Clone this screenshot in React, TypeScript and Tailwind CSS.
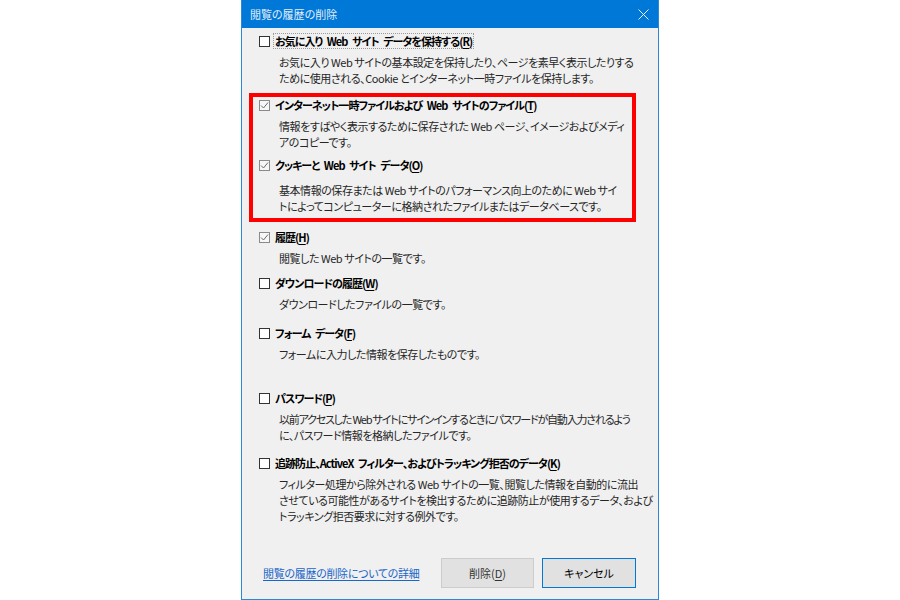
import { PropsWithChildren, ReactNode } from "react";

type OptionProps = {
  label: string;
  accel: string;
  lines: ReactNode[];
  checked?: boolean;
  focused?: boolean;
  className?: string;
  descClassName?: string;
};

const font = "font-['Noto_Sans_CJK_JP','Noto_Sans',sans-serif] [font-feature-settings:'palt']";

const CheckBox = ({ checked }: { checked?: boolean }) => {
  if (checked) {
    return (
      <span className="flex h-[11px] w-[11px] shrink-0 items-center justify-center border border-[#8a8a8a] bg-[#f7f7f7]">
        <svg width="9" height="9" viewBox="0 0 9 9" fill="none">
          <path d="M1 4.5 L3.5 7 L8 1.5" stroke="#6b6b6b" strokeWidth="1" />
        </svg>
      </span>
    );
  }
  return (
    <span className="block h-[11px] w-[11px] shrink-0 border border-[#333333] bg-white" />
  );
};

const Accel = ({ children }: PropsWithChildren) => (
  <span>
    (<span className="underline underline-offset-2">{children}</span>)
  </span>
);

const Option = ({
  label,
  accel,
  lines,
  checked,
  focused,
  className,
  descClassName = "mt-[5px]",
}: OptionProps) => {
  return (
    <div className={className}>
      <div className="flex h-[16px] items-center gap-[3px]">
        <CheckBox checked={checked} />
        <span
          className={
            focused
              ? "border border-dotted border-[#9a9a9a] px-[1px] text-[11px] leading-[14px] font-bold tracking-[-0.95px] [word-spacing:3px] whitespace-nowrap text-black"
              : "px-[2px] text-[11px] leading-[16px] font-bold tracking-[-0.95px] [word-spacing:3px] whitespace-nowrap text-black"
          }
        >
          {label}
          <Accel>{accel}</Accel>
        </span>
      </div>
      <div
        className={`${descClassName} pl-[20px] text-[11px] leading-[16px] tracking-[-0.45px] whitespace-nowrap text-[#262626]`}
      >
        {lines.map((line, i) => (
          <div key={i}>{line}</div>
        ))}
      </div>
    </div>
  );
};

export default function App() {
  return (
    <div className={`flex min-h-screen justify-center bg-white ${font}`}>
      <div className="flex h-[600px] w-[418px] flex-col overflow-hidden border border-t-0 border-[#2b88d9] bg-[#f0f0f0]">
        <div className="-mx-px flex h-[28px] shrink-0 items-center justify-between bg-[#0078d7] pl-[9px] pr-[10px]">
          <span className="text-[11px] text-[#e3eefa]">閲覧の履歴の削除</span>
          <svg width="11" height="11" viewBox="0 0 11 11">
            <path d="M0.5 0.5 L10.5 10.5 M10.5 0.5 L0.5 10.5" stroke="#e8f1fb" strokeWidth="1" />
          </svg>
        </div>

        <div className="flex-1 px-[17px] pt-[5px]">
          <Option
            checked={false}
            focused
            label="お気に入り Web サイト データを保持する"
            accel="R"
            lines={[
              "お気に入り Web サイトの基本設定を保持したり、ページを素早く表示したりする",
              "ために使用される、Cookie とインターネット一時ファイルを保持します。",
            ]}
          />

          <div className="mt-[7px] mr-[5px] -ml-[10px] border-4 border-[#ff0000] pb-[4px] pl-[6px]">
            <Option
              checked
              label="インターネット一時ファイルおよび Web サイトのファイル"
              accel="T"
              lines={[
                "情報をすばやく表示するために保存された Web ページ、イメージおよびメディ",
                "アのコピーです。",
              ]}
            />
            <Option
              checked
              className="mt-[7px]"
              descClassName="mt-[9px]"
              label="クッキーと Web サイト データ"
              accel="O"
              lines={[
                "基本情報の保存または Web サイトのパフォーマンス向上のために Web サイ",
                "トによってコンピューターに格納されたファイルまたはデータベースです。",
              ]}
            />
          </div>

          <Option
            checked
            className="mt-[7px]"
            label="履歴"
            accel="H"
            lines={["閲覧した Web サイトの一覧です。"]}
          />
          <Option
            className="mt-[9px]"
            label="ダウンロードの履歴"
            accel="W"
            lines={["ダウンロードしたファイルの一覧です。"]}
          />
          <Option
            className="mt-[13px]"
            label="フォーム データ"
            accel="F"
            lines={["フォームに入力した情報を保存したものです。"]}
          />
          <Option
            className="mt-[28px]"
            label="パスワード"
            accel="P"
            lines={[
              <span className="tracking-[-1.2px]">
                以前アクセスした Web サイトにサインインするときにパスワードが自動入力されるよう
              </span>,
              "に、パスワード情報を格納したファイルです。",
            ]}
          />
          <Option
            className="mt-[12px]"
            label="追跡防止、ActiveX フィルター、およびトラッキング拒否のデータ"
            accel="K"
            lines={[
              "フィルター処理から除外される Web サイトの一覧、閲覧した情報を自動的に流出",
              "させている可能性があるサイトを検出するために追跡防止が使用するデータ、および",
              "トラッキング拒否要求に対する例外です。",
            ]}
          />
        </div>

        <div className="flex shrink-0 items-center pb-[11px] pl-[21px] pr-[22px]">
          <a className="flex-1 text-[11px] tracking-[-0.3px] text-[#1a66c9] underline underline-offset-2">
            閲覧の履歴の削除についての詳細
          </a>
          <div className="flex gap-[8px]">
            <button className="h-[30px] w-[93px] border border-[#cccccc] bg-[#e1e1e1] text-[11px] text-[#333333]">
              削除<Accel>D</Accel>
            </button>
            <button className="h-[30px] w-[94px] border border-[#0078d7] bg-[#e1e1e1] text-[11px] text-black">
              キャンセル
            </button>
          </div>
        </div>
      </div>
    </div>
  );
}
